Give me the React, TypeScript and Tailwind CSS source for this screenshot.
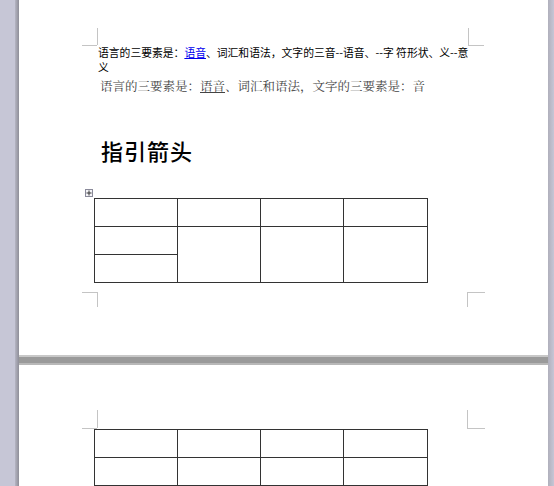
import React from 'react'

const cjk = { fontFamily: '"Noto Sans CJK SC", "Liberation Sans", sans-serif' }

function Mark({ className }: { className: string }) {
  return <div className={`absolute bg-[#c4c4c4] ${className}`} />
}

function TableHandle() {
  return (
    <svg width="8" height="8" viewBox="0 0 8 8" className="absolute left-[66px] top-[189px]">
      <rect x="0.5" y="0.5" width="7" height="7" fill="#f4f4f8" stroke="#8a8a9a" />
      <path d="M4 1.5v5M1.5 4h5" stroke="#333" strokeWidth="1" />
    </svg>
  )
}

const cell = 'border border-[#333] p-0'

export default function App() {
  return (
    <div className="h-[486px] w-[554px] overflow-hidden flex bg-[#c6c6d6]">
      <div className="w-[15px] shrink-0" />
      <div className="w-[4px] shrink-0 bg-gradient-to-r from-[#b4b4c2] to-[#8e8e98]" />
      <div className="w-[529px] shrink-0 flex flex-col">
        {/* page 1 */}
        <div className="relative h-[355px] shrink-0 bg-white" style={cjk}>
          <Mark className="left-[78px] top-[28px] w-px h-[17px]" />
          <Mark className="left-[63px] top-[45px] w-[15px] h-px" />
          <Mark className="left-[449px] top-[28px] w-px h-[17px]" />
          <Mark className="left-[449px] top-[45px] w-[16px] h-px" />
          <Mark className="left-[63px] top-[292px] w-[15px] h-px" />
          <Mark className="left-[78px] top-[292px] w-px h-[15px]" />
          <Mark className="left-[448px] top-[292px] w-[18px] h-px" />
          <Mark className="left-[448px] top-[292px] w-px h-[15px]" />
          <TableHandle />

          <div className="pt-[45px] pl-[79px]">
            <p className="text-[10.8px] leading-[15px] text-black whitespace-nowrap">
              语言的三要素是：<span className="text-[#0000ee] underline">语音</span>、词汇和语法，文字的三音--语音、--字 符形状、义--意
              <br />义
            </p>
            <p className="mt-[3px] text-[12.5px] leading-[16px] text-[#444] whitespace-nowrap pl-[2px]" style={{ fontFamily: '"Noto Serif CJK SC", "Noto Sans CJK SC", serif' }}>
              语言的三要素是：<span className="underline">语音</span>、词汇和语法，文字的三要素是：音
            </p>
            <h1 className="mt-[42px] pl-[3px] text-[22px] leading-[28px] font-medium tracking-[1px] text-black">指引箭头</h1>
          </div>
          <table className="ml-[75px] mt-[34px] border-collapse">
            <tbody>
              <tr className="h-[28px]">
                <td className={`${cell} w-[83px]`} />
                <td className={`${cell} w-[83px]`} />
                <td className={`${cell} w-[83px]`} />
                <td className={`${cell} w-[84px]`} />
              </tr>
              <tr className="h-[28px]">
                <td className={cell} />
                <td className={cell} rowSpan={2} />
                <td className={cell} rowSpan={2} />
                <td className={cell} rowSpan={2} />
              </tr>
              <tr className="h-[28px]">
                <td className={cell} />
              </tr>
            </tbody>
          </table>
        </div>

        {/* gap between pages */}
        <div className="h-[10px] shrink-0 flex flex-col">
          <div className="h-[2px] bg-[#c8c8c8]" />
          <div className="h-[6px] bg-[#9a9a9a]" />
          <div className="h-[2px] bg-[#b8b8b8]" />
        </div>

        {/* page 2 */}
        <div className="relative h-[200px] shrink-0 bg-white">
          <Mark className="left-[78px] top-[45px] w-px h-[18px]" />
          <Mark className="left-[63px] top-[63px] w-[15px] h-px" />
          <Mark className="left-[448px] top-[45px] w-px h-[18px]" />
          <Mark className="left-[448px] top-[63px] w-[18px] h-px" />
          <table className="ml-[75px] mt-[64px] border-collapse">
            <tbody>
              {[0, 1, 2].map((r) => (
                <tr key={r} className="h-[28px]">
                  <td className={`${cell} w-[83px]`} />
                  <td className={`${cell} w-[83px]`} />
                  <td className={`${cell} w-[83px]`} />
                  <td className={`${cell} w-[84px]`} />
                </tr>
              ))}
            </tbody>
          </table>
        </div>
      </div>
      <div className="w-[6px] shrink-0 bg-gradient-to-r from-[#b0b0bc] to-[#c6c6d6]" />
    </div>
  )
}
